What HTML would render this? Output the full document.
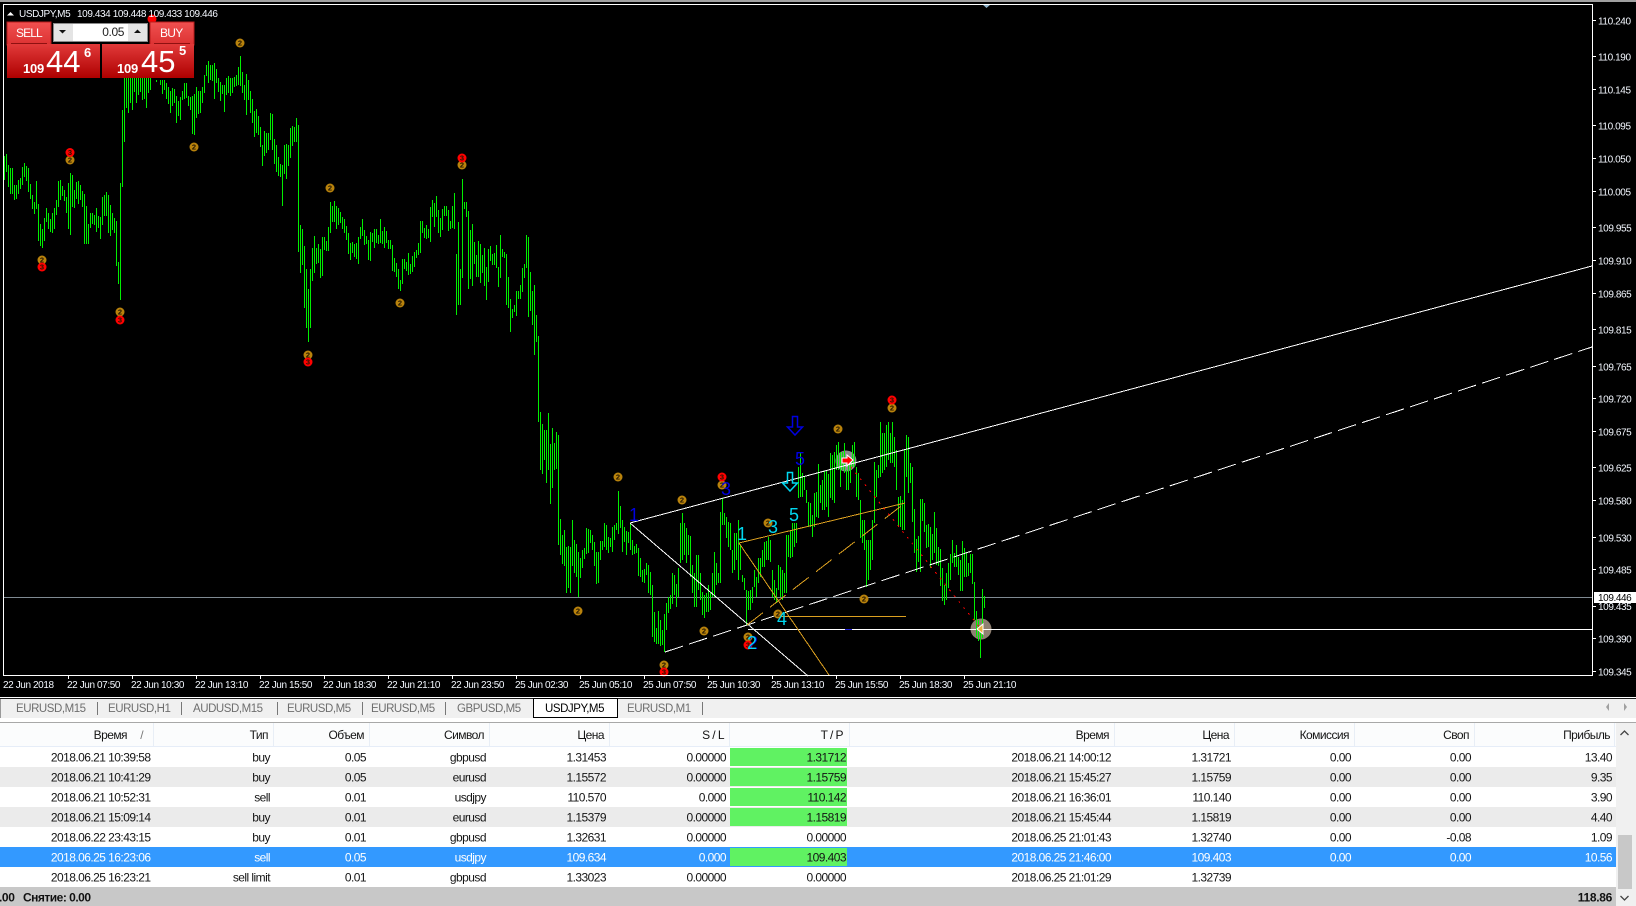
<!DOCTYPE html>
<html lang="ru"><head><meta charset="utf-8"><title>USDJPY,M5</title>
<style>
html,body{margin:0;padding:0;background:#000;width:1636px;height:906px;overflow:hidden}
svg{display:block;font-family:"Liberation Sans",sans-serif}
.ax{font-size:10px;letter-spacing:-.4px;fill:#f4f8ff}
.t{font-size:12px;letter-spacing:-.55px;fill:#141414}
.tab{font-size:11.5px;letter-spacing:-.45px;fill:#6e6e6e}
.m text{font-size:7.5px;font-weight:bold;fill:#201400;text-anchor:middle}
.m circle{r:4.5px}
.n{font-size:18px}
</style></head><body>
<svg width="1636" height="906" viewBox="0 0 1636 906" xmlns="http://www.w3.org/2000/svg">
<defs>
<linearGradient id="gp" x1="0" y1="0" x2="0" y2="1"><stop offset="0" stop-color="#e23a3a"/><stop offset="1" stop-color="#ae0000"/></linearGradient>
<linearGradient id="gb" x1="0" y1="0" x2="0" y2="1"><stop offset="0" stop-color="#f05050"/><stop offset="1" stop-color="#dc3232"/></linearGradient>
</defs>
<rect width="1636" height="697" fill="#000"/>
<rect width="1636" height="2" fill="#a0a0a0"/>
<path d="M982 4h9l-4.500 4z" fill="#8fb4cc"/>

<!-- indicator circles under bars -->
<circle cx="846" cy="461" r="10.500" fill="#8a8a8a"/>
<circle cx="981" cy="629" r="10.500" fill="#8f8072"/>

<!-- price lines -->
<g shape-rendering="crispEdges" fill="none">
<path d="M4 597.500H1592" stroke="#7f8a92"/>
<path d="M748 629.500H1592" stroke="#fff"/>
<path d="M845 629.500h7" stroke="#2020d0"/>
</g>

<!-- bars -->
<path transform="translate(.5 0)" shape-rendering="crispEdges" fill="none" stroke="#00ee00" d="M4 156V180M6 154V172M8 165V187M10 168V194M12 168V194M14 185V200M16 185V199M18 180V194M20 178V189M22 167V185M24 163V177M26 166V181M28 168V192M30 184V199M32 195V209M34 202V214M36 181V209M38 204V241M40 224V246M42 229V248M44 218V241M46 208V222M48 213V229M50 219V232M52 213V233M54 208V229M56 200V215M58 181V207M60 180V200M62 186V196M64 190V201M66 197V213M68 183V229M70 173V235M72 175V207M74 190V208M76 182V199M78 181V204M80 185V200M82 191V207M84 194V244M86 206V244M88 224V244M90 213V228M92 213V224M94 215V225M96 208V232M98 216V228M100 217V239M102 197V225M104 195V216M106 192V216M108 195V233M110 205V236M112 213V230M114 218V233M116 221V266M118 262V284M120 183V300M122 110V187M124 78V142M126 78V108M128 78V113M130 78V103M132 78V110M134 78V92M136 78V103M138 78V95M140 78V92M142 78V100M144 78V99M146 78V108M148 78V93M150 78V90M156 80V82M160 80V85M162 80V94M164 80V90M166 83V99M168 87V104M170 91V113M172 88V106M174 89V103M176 96V123M178 101V116M180 97V120M182 91V100M184 83V99M186 83V98M188 96V106M190 97V110M192 96V134M194 94V135M196 87V118M198 91V114M200 91V113M202 87V103M204 75V93M206 65V76M208 61V83M210 65V80M212 65V81M214 63V99M216 69V83M218 78V92M220 82V101M222 85V94M224 85V112M226 78V95M228 76V93M230 78V96M232 78V93M234 77V87M236 75V86M238 67V85M240 56V86M242 72V93M244 85V100M246 74V115M248 80V100M250 91V113M252 99V123M254 111V137M256 109V133M258 116V135M260 127V147M262 145V166M264 131V156M266 133V153M268 133V150M270 113V140M272 114V150M274 139V164M276 145V172M278 157V176M280 164V177M282 165V206M284 145V174M286 144V179M288 145V166M290 128V158M292 126V146M294 127V142M296 118V142M298 125V252M300 225V273M302 229V265M304 246V308M306 269V328M308 289V342M310 269V328M312 248V281M314 236V273M316 248V264M318 244V263M320 249V278M322 237V276M324 237V250M326 241V251M328 227V251M330 202V233M332 206V222M334 201V222M336 206V229M338 208V225M340 212V223M342 217V229M344 219V233M346 226V240M348 233V254M350 243V260M352 242V253M354 244V257M356 243V259M358 237V264M360 227V239M362 219V236M364 230V245M366 236V244M368 240V260M370 232V261M372 233V242M374 229V248M376 229V243M378 235V244M380 219V243M382 231V244M384 227V248M386 231V243M388 240V249M390 240V249M392 245V271M394 258V272M396 263V277M398 269V289M400 280V291M402 259V284M404 259V269M406 262V271M408 253V275M410 264V274M412 256V272M414 252V267M416 250V258M418 243V255M420 221V253M422 221V233M424 228V238M426 225V239M428 229V238M430 207V242M432 200V217M434 203V227M436 196V217M438 210V233M440 218V237M442 209V230M444 206V216M446 206V216M448 210V231M450 221V229M452 206V228M454 193V229M456 254V315M458 222V305M460 269V305M462 179V278M464 202V209M466 202V217M468 211V289M470 230V279M472 224V286M474 242V264M476 255V277M478 241V277M480 244V283M482 255V273M484 248V286M486 267V300M488 249V282M490 246V261M492 254V265M494 253V265M496 245V268M498 267V287M500 235V278M502 249V257M504 252V258M506 254V305M508 277V308M510 299V332M512 309V318M514 305V312M516 291V316M518 291V299M520 285V299M522 268V292M524 264V278M526 235V268M528 237V317M530 272V311M532 291V325M534 285V355M536 315V342M538 336V422M540 412V470M542 424V474M544 430V460M546 430V483M548 413V470M550 444V504M552 428V488M554 443V470M556 432V469M558 435V545M560 519V555M562 535V564M564 530V566M566 547V593M568 546V588M570 547V593M572 520V566M574 540V573M576 544V577M578 552V597M580 558V578M582 550V568M584 548V559M586 528V554M588 529V553M590 530V543M592 535V550M594 542V566M596 552V584M598 552V583M600 541V560M602 541V550M604 523V547M606 525V550M608 537V553M610 538V547M612 527V552M614 525V540M616 523V530M618 491V534M620 506V528M622 520V552M624 527V542M626 531V555M628 532V543M630 523V550M632 540V555M634 546V554M636 544V553M638 548V576M640 558V577M642 570V582M644 569V583M646 563V575M648 565V593M650 572V595M652 585V637M654 612V642M656 628V644M658 611V644M660 620V646M662 630V645M664 614V652M666 603V630M668 597V613M670 595V609M672 573V604M674 575V595M676 584V607M678 568V597M680 523V563M682 513V560M684 523V555M686 528V563M688 535V555M690 536V577M692 565V593M694 573V607M696 555V607M698 555V590M700 573V600M702 592V615M704 595V618M706 593V612M708 585V612M710 593V610M712 573V597M714 552V597M716 563V585M718 573V583M720 512V583M722 498V525M724 513V525M726 517V538M728 522V547M730 523V550M732 550V573M734 533V570M736 533V560M738 520V580M740 545V570M742 575V582M744 578V590M746 590V625M748 591V610M750 590V610M752 587V603M754 570V587M756 577V597M758 558V583M760 558V577M762 550V567M764 542V567M766 541V560M768 537V560M770 540V562M772 570V597M774 580V600M776 588V603M778 565V590M780 567V597M782 570V600M784 573V593M786 535V593M788 535V557M790 530V558M792 523V557M794 523V547M796 523V543M798 467V498M800 453V497M802 473V497M804 477V490M806 490V503M808 502V527M810 503V527M812 515V537M814 493V527M816 492V517M818 464V518M820 485V503M822 480V510M824 471V510M826 470V507M828 474V517M830 453V498M832 455V500M834 452V503M836 445V470M838 442V470M840 452V487M842 452V470M844 443V473M846 470V490M848 460V490M850 464V483M852 445V467M854 442V467M856 467V497M858 473V500M860 500V538M862 520V543M864 520V550M866 540V587M868 540V580M870 540V570M872 520V560M874 462V523M876 470V497M878 465V478M880 422V477M882 433V473M884 433V470M886 425V467M888 422V460M890 433V463M892 422V463M894 437V467M896 450V490M898 497V527M900 496V527M902 500V530M904 450V530M906 435V477M908 437V493M910 463V483M912 467V522M914 509V553M916 539V572M918 536V562M920 499V572M922 499V521M924 503V532M926 525V548M928 524V547M930 527V568M932 534V560M934 512V553M936 528V565M938 547V566M940 549V586M942 568V601M944 585V605M946 573V600M948 563V588M950 554V580M952 540V563M954 553V567M956 545V567M958 557V575M960 560V591M962 541V591M964 548V577M966 552V577M968 563V576M970 554V573M972 554V584M974 582V620M976 611V637M978 620V641M980 633V658M982 589V638M984 596V608"/>

<!-- trend lines -->
<g fill="none" shape-rendering="crispEdges">
<path d="M630 523L1592 266" stroke="#fff"/>
<path d="M665 652L1592 347" stroke="#fff" stroke-dasharray="19 6.300"/>
<path d="M630 523L808 676" stroke="#fff"/>
<path d="M739 543L905 503M739 543L829 675M778 616.500H906" stroke="#dca020"/>
<path d="M747 625L905 503" stroke="#dca020" stroke-dasharray="20 9"/>
<path d="M846 461L981 629" stroke="#f00" stroke-dasharray="2 5.500"/>
</g>
<path d="M853 460l-6-5v3h-5v5h5v3z" fill="#f00" stroke="#fff"/>
<path d="M977 629l6-5v10z" fill="#e8b040" stroke="#fff"/>

<!-- arrows -->
<path d="M792.500 416.500h5v10.500h5l-7.500 8l-7.500-8h5z" fill="none" stroke="#0000e0" stroke-width="1.500"/>
<path d="M787.500 472.500h5v10.500h5l-7.500 8l-7.500-8h5z" fill="none" stroke="#00d8f0" stroke-width="1.500"/>

<!-- markers -->
<g class="m">
<g fill="#b8820c">
<circle cx="240" cy="43" r="4"/><circle cx="194" cy="147" r="4"/><circle cx="70" cy="160" r="4"/><circle cx="42" cy="260" r="4"/><circle cx="120" cy="312" r="4"/><circle cx="330" cy="188" r="4"/><circle cx="308" cy="355" r="4"/><circle cx="462" cy="165" r="4"/><circle cx="400" cy="303" r="4"/><circle cx="618" cy="477" r="4"/><circle cx="578" cy="611" r="4"/><circle cx="682" cy="500" r="4"/><circle cx="722" cy="485" r="4"/><circle cx="664" cy="665" r="4"/><circle cx="704" cy="631" r="4"/><circle cx="768" cy="523" r="4"/><circle cx="778" cy="614" r="4"/><circle cx="748" cy="637" r="4"/><circle cx="838" cy="429" r="4"/><circle cx="892" cy="408" r="4"/><circle cx="864" cy="599" r="4"/>
</g>
<g fill="#f00">
<circle cx="152" cy="19" r="4"/><circle cx="70" cy="152.500" r="4"/><circle cx="42" cy="267" r="4"/><circle cx="120" cy="320" r="4"/><circle cx="308" cy="362" r="4"/><circle cx="462" cy="158" r="4"/><circle cx="722" cy="477" r="4"/><circle cx="664" cy="672" r="4"/><circle cx="748" cy="645" r="4"/><circle cx="892" cy="400" r="4"/>
</g>
<text x="240" y="45.500">2</text><text x="194" y="149.500">2</text><text x="70" y="162.500">2</text><text x="42" y="262.500">2</text><text x="120" y="314.500">2</text><text x="330" y="190.500">2</text><text x="308" y="357.500">2</text><text x="462" y="167.500">2</text><text x="400" y="305.500">2</text><text x="618" y="479.500">2</text><text x="578" y="613.500">2</text><text x="682" y="502.500">2</text><text x="722" y="487.500">2</text><text x="664" y="667.500">2</text><text x="704" y="633.500">2</text><text x="768" y="525.500">2</text><text x="778" y="616.500">2</text><text x="748" y="639.500">2</text><text x="838" y="431.500">2</text><text x="892" y="410.500">2</text><text x="864" y="601.500">2</text>
<text x="70" y="155">3</text><text x="42" y="269.500">3</text><text x="120" y="322.500">3</text><text x="308" y="364.500">3</text><text x="462" y="160.500">3</text><text x="722" y="479.500">3</text><text x="664" y="674.500">3</text><text x="748" y="647.500">3</text><text x="892" y="402.500">3</text>
</g>

<!-- wave numbers -->
<g class="n" fill="#0000e0" text-anchor="middle">
<text x="634" y="521">1</text><text x="726" y="495">3</text><text x="800" y="465">5</text><text x="753" y="649">2</text>
</g>
<g class="n" fill="#00d8f0" text-anchor="middle">
<text x="742" y="540">1</text><text x="773" y="533">3</text><text x="794" y="521">5</text><text x="782" y="625">4</text><text x="752" y="649">2</text>
</g>

<!-- chart frame -->
<rect x="3.500" y="4.500" width="1589" height="671" fill="none" stroke="#fff" shape-rendering="crispEdges"/>

<!-- Y axis -->
<path shape-rendering="crispEdges" stroke="#fff" d="M1593 20.500h3M1593 56.500h3M1593 89.500h3M1593 125.500h3M1593 158.500h3M1593 191.500h3M1593 227.500h3M1593 260.500h3M1593 293.500h3M1593 329.500h3M1593 366.500h3M1593 398.500h3M1593 431.500h3M1593 467.500h3M1593 500.500h3M1593 537.500h3M1593 569.500h3M1593 606.500h3M1593 638.500h3M1593 671.500h3"/>
<g class="ax">
<text x="1598" y="24.500">110.240</text><text x="1598" y="60.500">110.190</text><text x="1598" y="93.500">110.145</text><text x="1598" y="129.500">110.095</text><text x="1598" y="162.500">110.050</text><text x="1598" y="195.500">110.005</text><text x="1598" y="231.500">109.955</text><text x="1598" y="264.500">109.910</text><text x="1598" y="297.500">109.865</text><text x="1598" y="333.500">109.815</text><text x="1598" y="370.500">109.765</text><text x="1598" y="402.500">109.720</text><text x="1598" y="435.500">109.675</text><text x="1598" y="471.500">109.625</text><text x="1598" y="504.500">109.580</text><text x="1598" y="541.500">109.530</text><text x="1598" y="573.500">109.485</text><text x="1598" y="610">109.435</text><text x="1598" y="642.500">109.390</text><text x="1598" y="675.500">109.345</text>
</g>
<rect x="1594" y="592" width="42" height="11" fill="#fff"/>
<text class="ax" x="1598" y="601" style="fill:#000">109.446</text>

<!-- X axis -->
<path shape-rendering="crispEdges" stroke="#fff" d="M68.500 676v3M132.500 676v3M196.500 676v3M260.500 676v3M324.500 676v3M388.500 676v3M452.500 676v3M516.500 676v3M580.500 676v3M644.500 676v3M708.500 676v3M772.500 676v3M836.500 676v3M900.500 676v3M964.500 676v3"/>
<g class="ax">
<text x="3" y="688">22 Jun 2018</text><text x="67" y="688">22 Jun 07:50</text><text x="131" y="688">22 Jun 10:30</text><text x="195" y="688">22 Jun 13:10</text><text x="259" y="688">22 Jun 15:50</text><text x="323" y="688">22 Jun 18:30</text><text x="387" y="688">22 Jun 21:10</text><text x="451" y="688">22 Jun 23:50</text><text x="515" y="688">25 Jun 02:30</text><text x="579" y="688">25 Jun 05:10</text><text x="643" y="688">25 Jun 07:50</text><text x="707" y="688">25 Jun 10:30</text><text x="771" y="688">25 Jun 13:10</text><text x="835" y="688">25 Jun 15:50</text><text x="899" y="688">25 Jun 18:30</text><text x="963" y="688">25 Jun 21:10</text>
</g>

<!-- title -->
<path d="M7 15.500l3.500-3.500l3.500 3.500z" fill="#fff"/>
<text class="ax" x="19" y="17">USDJPY,M5</text>
<text class="ax" x="77" y="17">109.434 109.448 109.433 109.446</text>

<!-- one click panel -->
<rect x="7" y="22" width="44" height="23" fill="url(#gb)" stroke="#b81c1c"/>
<rect x="150" y="22" width="44" height="23" fill="url(#gb)" stroke="#b81c1c"/>
<rect x="7" y="44" width="93" height="34" fill="url(#gp)"/>
<rect x="102" y="44" width="92" height="34" fill="url(#gp)"/>
<path d="M11 43.500h36M154 43.500h36" stroke="#8e1010"/>
<text x="16" y="37" font-size="12px" letter-spacing="-.9" fill="#fff">SELL</text>
<text x="160" y="37" font-size="12px" letter-spacing="-.7" fill="#fff">BUY</text>
<rect x="53.500" y="23.500" width="94" height="18" fill="#e4e4e4" stroke="#8a8a8a"/>
<rect x="73" y="24" width="55" height="17" fill="#fff"/>
<path d="M59 30h7l-3.500 3.500z" fill="#111"/><path d="M134 33h7l-3.500-3.500z" fill="#111"/>
<text x="124" y="36" font-size="12px" letter-spacing="-.4" fill="#222" text-anchor="end">0.05</text>
<text x="23" y="73" font-size="13px" font-weight="bold" letter-spacing="-.2" fill="#fff">109</text>
<text x="46" y="72" font-size="31px" fill="#fff">44</text>
<text x="84" y="57" font-size="13px" font-weight="bold" fill="#fff">6</text>
<text x="117" y="73" font-size="13px" font-weight="bold" letter-spacing="-.2" fill="#fff">109</text>
<text x="141" y="72" font-size="31px" fill="#fff">45</text>
<text x="179" y="55" font-size="13px" font-weight="bold" fill="#fff">5</text>

<!-- tab strip -->
<rect y="697" width="1636" height="1" fill="#fff"/>
<rect y="698" width="1636" height="1" fill="#1a1a1a"/>
<rect y="699" width="1636" height="19" fill="#f0f0f0"/>
<rect y="718" width="1636" height="4" fill="#fff"/>
<rect y="722" width="1636" height="1" fill="#a8a8a8"/>
<rect x="0" y="699" width="1" height="19" fill="#999"/>
<path shape-rendering="crispEdges" stroke="#777" d="M97.500 702v13M181.500 702v13M277.500 702v13M362.500 702v13M445.500 702v13M702.500 702v13"/>
<rect x="533.500" y="698.500" width="84" height="19" fill="#fff" stroke="#000" shape-rendering="crispEdges"/>
<g class="tab">
<text x="16" y="712">EURUSD,M15</text><text x="108" y="712">EURUSD,H1</text><text x="193" y="712">AUDUSD,M15</text><text x="287" y="712">EURUSD,M5</text><text x="371" y="712">EURUSD,M5</text><text x="457" y="712">GBPUSD,M5</text><text x="545" y="712" style="fill:#000">USDJPY,M5</text><text x="627" y="712">EURUSD,M1</text>
</g>
<path d="M1609 703v8l-3-4zM1624 703v8l3-4z" fill="#a0a0a0"/>

<!-- table -->
<rect y="723" width="1616" height="23" fill="#fbfcfd"/>
<rect y="746" width="1616" height="1" fill="#e6edf8"/>
<rect y="747" width="1616" height="140" fill="#fff"/>
<rect y="767" width="1616" height="20" fill="#ebebeb"/>
<rect y="807" width="1616" height="20" fill="#ebebeb"/>
<rect y="847" width="1616" height="20" fill="#3399ff"/>
<g fill="#60f262"><rect x="730" y="748" width="117" height="18"/><rect x="730" y="768" width="117" height="18"/><rect x="730" y="788" width="117" height="18"/><rect x="730" y="808" width="117" height="18"/><rect x="730" y="848" width="117" height="18"/></g>
<path shape-rendering="crispEdges" stroke="#e8eef6" d="M153.500 723v23M273.500 723v23M369.500 723v23M489.500 723v23M609.500 723v23M729.500 723v23M849.500 723v23M1114.500 723v23M1234.500 723v23M1354.500 723v23M1474.500 723v23M1614.500 723v23"/>
<g class="t" text-anchor="end">
<text x="127" y="739">Время</text><text x="143" y="739" style="fill:#777">/</text><text x="268" y="739">Тип</text><text x="364" y="739">Объем</text><text x="484" y="739">Символ</text><text x="604" y="739">Цена</text><text x="724" y="739">S / L</text><text x="843" y="739">T / P</text><text x="1109" y="739">Время</text><text x="1229" y="739">Цена</text><text x="1349" y="739">Комиссия</text><text x="1469" y="739">Своп</text><text x="1610" y="739">Прибыль</text>

<text x="150.500" y="761.500">2018.06.21 10:39:58</text><text x="270" y="761.500">buy</text><text x="366" y="761.500">0.05</text><text x="486" y="761.500">gbpusd</text><text x="606" y="761.500">1.31453</text><text x="726" y="761.500">0.00000</text><text x="846" y="761.500">1.31712</text><text x="1111" y="761.500">2018.06.21 14:00:12</text><text x="1231" y="761.500">1.31721</text><text x="1351" y="761.500">0.00</text><text x="1471" y="761.500">0.00</text><text x="1612" y="761.500">13.40</text>

<text x="150.500" y="781.500">2018.06.21 10:41:29</text><text x="270" y="781.500">buy</text><text x="366" y="781.500">0.05</text><text x="486" y="781.500">eurusd</text><text x="606" y="781.500">1.15572</text><text x="726" y="781.500">0.00000</text><text x="846" y="781.500">1.15759</text><text x="1111" y="781.500">2018.06.21 15:45:27</text><text x="1231" y="781.500">1.15759</text><text x="1351" y="781.500">0.00</text><text x="1471" y="781.500">0.00</text><text x="1612" y="781.500">9.35</text>

<text x="150.500" y="801.500">2018.06.21 10:52:31</text><text x="270" y="801.500">sell</text><text x="366" y="801.500">0.01</text><text x="486" y="801.500">usdjpy</text><text x="606" y="801.500">110.570</text><text x="726" y="801.500">0.000</text><text x="846" y="801.500">110.142</text><text x="1111" y="801.500">2018.06.21 16:36:01</text><text x="1231" y="801.500">110.140</text><text x="1351" y="801.500">0.00</text><text x="1471" y="801.500">0.00</text><text x="1612" y="801.500">3.90</text>

<text x="150.500" y="821.500">2018.06.21 15:09:14</text><text x="270" y="821.500">buy</text><text x="366" y="821.500">0.01</text><text x="486" y="821.500">eurusd</text><text x="606" y="821.500">1.15379</text><text x="726" y="821.500">0.00000</text><text x="846" y="821.500">1.15819</text><text x="1111" y="821.500">2018.06.21 15:45:44</text><text x="1231" y="821.500">1.15819</text><text x="1351" y="821.500">0.00</text><text x="1471" y="821.500">0.00</text><text x="1612" y="821.500">4.40</text>

<text x="150.500" y="841.500">2018.06.22 23:43:15</text><text x="270" y="841.500">buy</text><text x="366" y="841.500">0.01</text><text x="486" y="841.500">gbpusd</text><text x="606" y="841.500">1.32631</text><text x="726" y="841.500">0.00000</text><text x="846" y="841.500">0.00000</text><text x="1111" y="841.500">2018.06.25 21:01:43</text><text x="1231" y="841.500">1.32740</text><text x="1351" y="841.500">0.00</text><text x="1471" y="841.500">-0.08</text><text x="1612" y="841.500">1.09</text>

<text style="fill:#fff" x="150.500" y="861.500">2018.06.25 16:23:06</text><text style="fill:#fff" x="270" y="861.500">sell</text><text style="fill:#fff" x="366" y="861.500">0.05</text><text style="fill:#fff" x="486" y="861.500">usdjpy</text><text style="fill:#fff" x="606" y="861.500">109.634</text><text style="fill:#fff" x="726" y="861.500">0.000</text><text x="846" y="861.500">109.403</text><text style="fill:#fff" x="1111" y="861.500">2018.06.25 21:46:00</text><text style="fill:#fff" x="1231" y="861.500">109.403</text><text style="fill:#fff" x="1351" y="861.500">0.00</text><text style="fill:#fff" x="1471" y="861.500">0.00</text><text style="fill:#fff" x="1612" y="861.500">10.56</text>

<text x="150.500" y="881.500">2018.06.25 16:23:21</text><text x="270" y="881.500">sell limit</text><text x="366" y="881.500">0.01</text><text x="486" y="881.500">gbpusd</text><text x="606" y="881.500">1.33023</text><text x="726" y="881.500">0.00000</text><text x="846" y="881.500">0.00000</text><text x="1111" y="881.500">2018.06.25 21:01:29</text><text x="1231" y="881.500">1.32739</text>
</g>

<!-- status -->
<rect y="887" width="1616" height="19" fill="#c8c8c8"/>
<text x="-1" y="901.500" font-size="12px" font-weight="bold" letter-spacing="-.4" fill="#111">.00</text>
<text x="23" y="901.500" font-size="12px" font-weight="bold" letter-spacing="-.5" fill="#111">Снятие: 0.00</text>
<text x="1612" y="901.500" font-size="12px" font-weight="bold" letter-spacing="-.3" fill="#111" text-anchor="end">118.86</text>

<!-- scrollbar -->
<rect x="1616" y="723" width="20" height="183" fill="#f0f0f0"/>
<rect x="1618" y="835" width="14" height="54" fill="#c8c8c8"/>
<path d="M1620.500 735l4-4l4 4M1620.500 896l4 4l4-4" fill="none" stroke="#444" stroke-width="1.300"/>
</svg>
</body></html>
